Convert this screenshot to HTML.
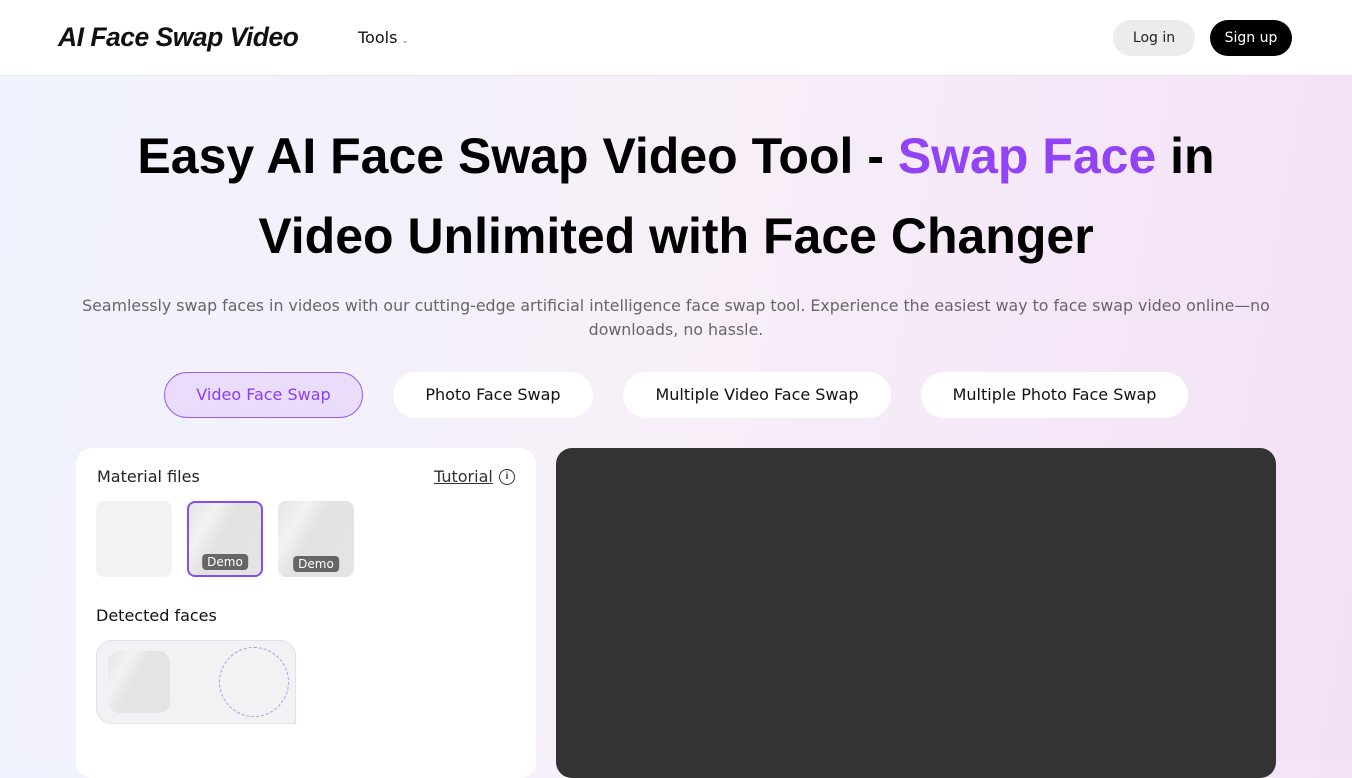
<!DOCTYPE html>
<html><head><meta charset="utf-8"><style>
*{box-sizing:border-box;margin:0;padding:0}
body{width:1352px;height:760px;overflow:hidden;font-family:"DejaVu Sans","Liberation Sans",sans-serif;background:linear-gradient(100deg,#eff3fd 0%,#f7eff8 50%,#f3e0f7 100%);position:relative}
.nav{height:76px;background:#fff;border-bottom:1px solid #e6e6ee;position:relative}
.logo{position:absolute;left:58px;top:22px;font:italic bold 26.5px "Liberation Sans",sans-serif;letter-spacing:-0.5px;color:#111}
.tools{position:absolute;left:358px;top:28px;font-size:16px;color:#111}
.tools span{font-size:9px;color:#777;margin-left:4px}
.btn{position:absolute;top:20px;height:36px;border-radius:18px;font-size:14px;line-height:36px;text-align:center}
h1{position:absolute;left:0;width:1352px;top:116px;text-align:center;font:bold 50px/80px "Liberation Sans",sans-serif;color:#000}
h1 em{font-style:normal;color:#9243f5}
.sub{position:absolute;left:70px;width:1212px;top:294px;text-align:center;font-size:15.8px;line-height:24px;color:#666}
.tab{position:absolute;top:372px;height:46px;border-radius:23px;background:#fff;font-size:16px;line-height:46px;text-align:center;color:#111}
.card{position:absolute;left:76px;top:448px;width:460px;height:330px;background:#fff;border-radius:16px}
.dark{position:absolute;left:556px;top:448px;width:720px;height:330px;background:#333;border-radius:16px}
.th{position:absolute;top:501px;width:76px;height:76px;border-radius:8px;background:linear-gradient(120deg,#e4e4e4 0%,#f2f2f2 25%,#e2e2e2 45%,#e5e5e5 100%)}
.demo{position:absolute;left:50%;transform:translateX(-50%);background:#666;color:#fff;font-size:12px;border-radius:4px;padding:0 5px;line-height:16px}
</style></head><body>
<div class="nav">
<div class="logo">AI Face Swap Video</div>
<div class="tools">Tools<span>&#8964;</span></div>
<div class="btn" style="left:1113px;width:82px;background:#ececec;color:#222">Log in</div>
<div class="btn" style="left:1210px;width:82px;background:#000;color:#fff">Sign up</div>
</div>
<h1>Easy AI Face Swap Video Tool - <em>Swap Face</em> in<br>Video Unlimited with Face Changer</h1>
<div class="sub">Seamlessly swap faces in videos with our cutting-edge artificial intelligence face swap tool. Experience the easiest way to face swap video online—no downloads, no hassle.</div>
<div class="tab" style="left:164px;width:199px;background:#eadcfb;border:1px solid #9a5cf0;color:#8a3ff0;line-height:44px">Video Face Swap</div>
<div class="tab" style="left:393px;width:200px">Photo Face Swap</div>
<div class="tab" style="left:623px;width:268px">Multiple Video Face Swap</div>
<div class="tab" style="left:921px;width:267px">Multiple Photo Face Swap</div>
<div class="card">
<div style="position:absolute;left:21px;top:19px;font-size:16px;color:#222">Material files</div>
<div style="position:absolute;left:358px;top:19px;font-size:16px;color:#333;text-decoration:underline">Tutorial</div>
<div style="position:absolute;left:423px;top:21px;width:16px;height:16px;border:1.5px solid #333;border-radius:50%;font:bold 10px/13px sans-serif;text-align:center;color:#333">i</div>
<div style="position:absolute;left:20px;top:158px;font-size:16px;color:#111;font-weight:500">Detected faces</div>
<div style="position:absolute;left:20px;top:192px;width:200px;height:84px;border-radius:16px 16px 0 16px;background:#f2f2f4;border:1px solid #e4dff0">
<div style="position:absolute;left:11px;top:10px;width:62px;height:62px;border-radius:12px;background:linear-gradient(120deg,#e4e4e4 0%,#f2f2f2 25%,#e4e4e4 45%)"></div>
<div style="position:absolute;left:122px;top:6px;width:70px;height:70px;border-radius:50%;border:1px dashed #b29ae8"></div>
</div>
</div>
<div class="th" style="left:96px;background:#f2f2f2"></div>
<div class="th" style="left:187px;border:2px solid #8a4ee8"><div class="demo" style="top:51px">Demo</div></div>
<div class="th" style="left:278px"><div class="demo" style="top:55px">Demo</div></div>
<div class="dark"></div>
</body></html>
